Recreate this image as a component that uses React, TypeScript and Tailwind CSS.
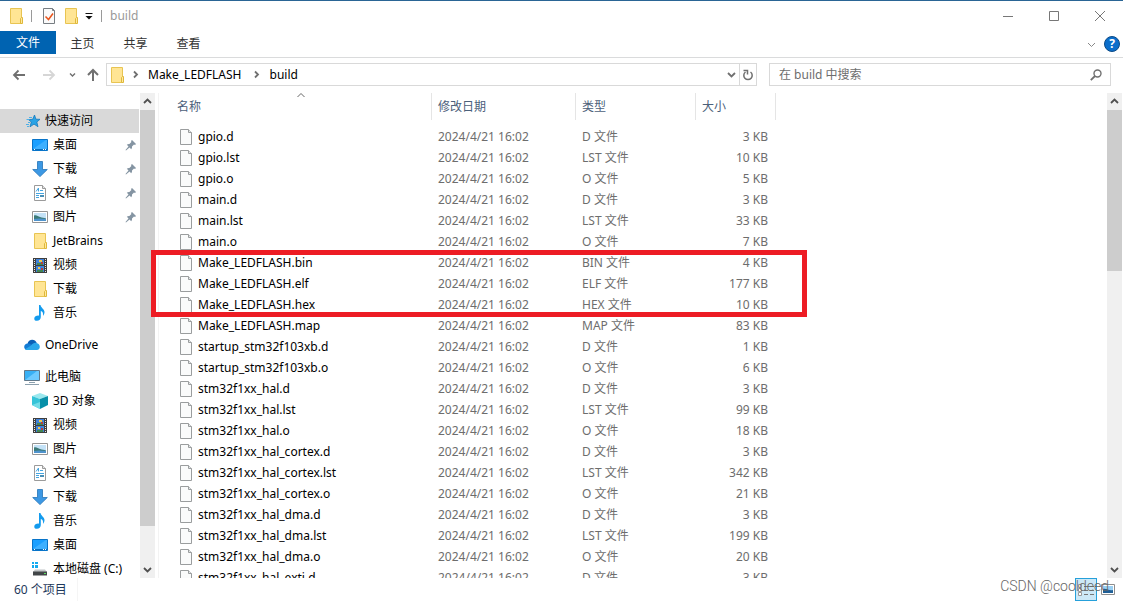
import type { ReactNode } from 'react';

type IconName =
  | 'star'
  | 'desktop'
  | 'download'
  | 'document'
  | 'picture'
  | 'folder'
  | 'video'
  | 'music'
  | 'cloud'
  | 'pc'
  | 'cube'
  | 'disk';

interface NavEntry {
  label: string;
  icon: IconName;
  pinned?: boolean;
}

interface NavGroup extends NavEntry {
  selected?: boolean;
  items: NavEntry[];
}

interface FileRow {
  name: string;
  size: number;
}

const NAV: NavGroup[] = [
  {
    label: '快速访问',
    icon: 'star',
    selected: true,
    items: [
      { label: '桌面', icon: 'desktop', pinned: true },
      { label: '下载', icon: 'download', pinned: true },
      { label: '文档', icon: 'document', pinned: true },
      { label: '图片', icon: 'picture', pinned: true },
      { label: 'JetBrains', icon: 'folder' },
      { label: '视频', icon: 'video' },
      { label: '下载', icon: 'folder' },
      { label: '音乐', icon: 'music' },
    ],
  },
  { label: 'OneDrive', icon: 'cloud', items: [] },
  {
    label: '此电脑',
    icon: 'pc',
    items: [
      { label: '3D 对象', icon: 'cube' },
      { label: '视频', icon: 'video' },
      { label: '图片', icon: 'picture' },
      { label: '文档', icon: 'document' },
      { label: '下载', icon: 'download' },
      { label: '音乐', icon: 'music' },
      { label: '桌面', icon: 'desktop' },
      { label: '本地磁盘 (C:)', icon: 'disk' },
    ],
  },
];

const FILES: FileRow[] = [
  { name: 'gpio.d', size: 3 },
  { name: 'gpio.lst', size: 10 },
  { name: 'gpio.o', size: 5 },
  { name: 'main.d', size: 3 },
  { name: 'main.lst', size: 33 },
  { name: 'main.o', size: 7 },
  { name: 'Make_LEDFLASH.bin', size: 4 },
  { name: 'Make_LEDFLASH.elf', size: 177 },
  { name: 'Make_LEDFLASH.hex', size: 10 },
  { name: 'Make_LEDFLASH.map', size: 83 },
  { name: 'startup_stm32f103xb.d', size: 1 },
  { name: 'startup_stm32f103xb.o', size: 6 },
  { name: 'stm32f1xx_hal.d', size: 3 },
  { name: 'stm32f1xx_hal.lst', size: 99 },
  { name: 'stm32f1xx_hal.o', size: 18 },
  { name: 'stm32f1xx_hal_cortex.d', size: 3 },
  { name: 'stm32f1xx_hal_cortex.lst', size: 342 },
  { name: 'stm32f1xx_hal_cortex.o', size: 21 },
  { name: 'stm32f1xx_hal_dma.d', size: 3 },
  { name: 'stm32f1xx_hal_dma.lst', size: 199 },
  { name: 'stm32f1xx_hal_dma.o', size: 20 },
  { name: 'stm32f1xx_hal_exti.d', size: 3 },
];

const fileType = (name: string) => `${name.split('.').pop()!.toUpperCase()} 文件`;

const ICONS: Record<IconName, ReactNode> = {
  star: (
    <>
      <path d="M10.500 2l1.400 4.200 4.100.1-3.200 2.700 1.200 4.700-4-2.600-4 2.700 1.300-4.800L4.500 6.600l4.200-.3z" fill="#29a3e6" stroke="#1479bd" strokeWidth=".8" />
      <path d="M5 4.500h3M2.500 6.500h3M4 9.500h2M2 11.500h3M3 13.500h2" stroke="#4fb0e6" />
    </>
  ),
  desktop: (
    <>
      <path d="M.5 2.500h15v11H.5z" fill="#1a9fff" stroke="#0874c9" />
      <path d="M1 12L14 3h1v9z" fill="#3eb0ff" />
      <path d="M1 12.500h14" stroke="#0870c0" />
      <path d="M2 12.500h1M11 12.500h1M13 12.500h1" stroke="#fff" />
    </>
  ),
  download: <path d="M5.500.5h5v8h4.800L8 15.600.7 8.500h4.800z" fill="#3c98e4" stroke="#2474b8" strokeWidth=".8" />,
  document: (
    <>
      <path d="M2.500.5h8l3 3v12h-11z" fill="#fff" stroke="#9b9b9b" />
      <path d="M10.500.5v3h3" fill="#e5e5e5" stroke="#9b9b9b" />
      <path d="M4 6.500L6.500 3v3.500M8 5.500h3M4 8.500h8M4 10.500h3M4 12.500h3" stroke="#45a5e0" fill="none" />
      <path d="M8 10h4v2H8z" fill="#4b8fb5" />
    </>
  ),
  picture: (
    <>
      <path d="M.5 2.500h15v11H.5z" fill="#fff" stroke="#959595" />
      <path d="M2 4h12v8H2z" fill="#c4e2f7" />
      <path d="M2 6.500c2-1 4 .5 6 1.500s4 .8 6 1.500v1H2z" fill="#3c7a78" />
      <path d="M2 10c4-1 8-.5 12 0v2H2z" fill="#4f93cc" />
    </>
  ),
  folder: (
    <>
      <path d="M2.500.5h11v15h-11z" fill="#ffe594" stroke="#e8c452" />
      <path d="M12.500 15.500v-5l1-1h1v6z" fill="#ffe89e" stroke="#dfb83a" />
    </>
  ),
  video: (
    <>
      <path d="M1 1h14v15H1z" fill="#3f3f3f" />
      <path d="M2.500 2v13M13.500 2v13" stroke="#e6e6e6" strokeDasharray="1 1" />
      <path d="M4 2h8v6H4zM4 9h8v6H4z" fill="#3f82dc" />
      <path d="M5 6h6v2H5zM5 13h6v2H5z" fill="#428653" />
      <path d="M7 3h3v2H7zM6 10h2v2H6z" fill="#efc94c" />
      <path d="M9 5h2v2H9zM9 11h2v2H9z" fill="#ba3f35" />
    </>
  ),
  music: (
    <path d="M7 0h1.500c.2 2.700 4 4 4 7 0 2-.8 3-1.500 3.800.4-2.700-.3-4.200-2.200-4.800V12c0 2-1.600 3.800-3.800 3.800-2 0-3-1-2.700-2.600.3-1.700 2.400-2.900 4.700-2.500z" fill="#139bee" />
  ),
  cloud: (
    <>
      <path d="M3.500 7C4 4 6 2.800 8.200 2.800c2 0 3.600 1 4.500 3L8 10z" fill="#0a60b7" />
      <path d="M3.500 6.500c2 0 2.500.5 4 1.300l6 4.200-10 1C1.500 13 .2 11.600.2 10c0-2 1.600-3.500 3.300-3.500z" fill="#137bd4" />
      <path d="M7 8.500c1.700-2.200 3.500-3 5.400-2.500 2.100.3 3.400 1.800 3.400 3.800 0 1.700-1 3.200-3 3.200H3c-1.200 0-1.600-.3-2-.8z" fill="#2aa7ea" />
    </>
  ),
  pc: (
    <>
      <path d="M.5 1.500h15v10H.5z" fill="#38b0f5" stroke="#61788a" />
      <path d="M1 11L13 2h2v9z" fill="#6dcaff" />
      <path d="M5 13.500h6M1 15.500h14" stroke="#8ca0ae" />
    </>
  ),
  cube: (
    <>
      <path d="M8 0l8 3-8 3-8-3z" fill="#9be8ee" />
      <path d="M0 3l8 3v10l-8-4z" fill="#35c4d8" />
      <path d="M16 3L8 6v10l8-4z" fill="#078fa8" />
      <path d="M0 12l8-3v7z" fill="#73dce7" />
    </>
  ),
  disk: (
    <>
      <path d="M0 1h2v2H0zM3 1h3v2H3zM0 4h2v3H0zM3 4h3v3H3z" fill="#13aaf0" />
      <path d="M3 8.500h10l2 2.500H1z" fill="#c1c5c7" />
      <path d="M1 10.500h14v4H1z" fill="#424648" />
      <path d="M12 12.500h2" stroke="#5be05f" />
    </>
  ),
};

function Icon({ name }: { name: IconName }) {
  return (
    <svg viewBox="0 0 16 16" className="size-4 shrink-0" aria-hidden="true">
      {ICONS[name]}
    </svg>
  );
}

function PinIcon() {
  return (
    <svg viewBox="0 0 12 12" className="size-3 shrink-0" aria-hidden="true">
      <path d="M7 1l4 4-1 1-1-.4-2 2c.1 1 0 1.900-.8 2.600L4.500 8.500 1 11.500l-.5-.5 3-3.500L1.800 5.800c.8-.7 1.600-.9 2.600-.8l2-2L6 2z" fill="#8494a2" />
    </svg>
  );
}

function PageIcon() {
  return (
    <svg viewBox="0 0 12 16" className="h-4 w-3 shrink-0" aria-hidden="true">
      <path d="M.5.5h8l3 3v12H.5z" fill="#fafbfb" stroke="#9a9d9e" />
      <path d="M8.500.5v3h3" fill="#e4e7e8" stroke="#9a9d9e" />
    </svg>
  );
}

function Chevron({ dir, className = '' }: { dir: 'up' | 'down' | 'right'; className?: string }) {
  const d = { up: 'M1 6l3.500-3.500L8 6', down: 'M1 3l3.500 3.500L8 3', right: 'M3 1l3.500 3.500L3 8' }[dir];
  return (
    <svg viewBox="0 0 9 9" className={`size-[9px] shrink-0 ${className}`} aria-hidden="true">
      <path d={d} fill="none" stroke="currentColor" />
    </svg>
  );
}

// heavier arrow for scroll buttons and the address bar
function Arrow({ dir, className = '' }: { dir: 'up' | 'down' | 'right'; className?: string }) {
  const d = { up: 'M1 6l3.500-3.500L8 6', down: 'M1 3l3.500 3.500L8 3', right: 'M3 1.500l3 3-3 3' }[dir];
  return (
    <svg viewBox="0 0 9 9" className={`size-[9px] shrink-0 ${className}`} aria-hidden="true">
      <path d={d} fill="none" stroke="currentColor" strokeWidth="1.800" />
    </svg>
  );
}

function ScrollBar({ thumb }: { thumb: string }) {
  return (
    <div className="flex w-[15px] shrink-0 flex-col bg-[#f0f0f0] text-[#505050]">
      <button type="button" aria-label="向上滚动" className="flex h-[17px] shrink-0 items-center justify-center">
        <Arrow dir="up" />
      </button>
      <div className="min-h-0 flex-1">
        <div className={`w-full bg-[#cdcdcd] ${thumb}`} />
      </div>
      <button type="button" aria-label="向下滚动" className="flex h-[17px] shrink-0 items-center justify-center">
        <Arrow dir="down" />
      </button>
    </div>
  );
}

function TitleBar() {
  return (
    <header className="flex h-[31px] shrink-0 items-center border-t border-[#2a6595] pb-px pl-2">
      <Icon name="folder" />
      <span className="ml-[7px] h-3 w-px bg-[#9a9a9a]" />
      <button type="button" aria-label="属性" className="ml-[10px]">
        <svg viewBox="0 0 14 16" className="h-4 w-[14px]">
          <path d="M1.500.5h9l2 2v13h-11z" fill="#fafafa" stroke="#777d82" />
          <path d="M10.500.5v2h2" fill="none" stroke="#777d82" />
          <path d="M3.500 8.500l3 3L11 5.500" fill="none" stroke="#e9541c" strokeWidth="1.500" />
        </svg>
      </button>
      <button type="button" aria-label="新建文件夹" className="ml-[7px]">
        <Icon name="folder" />
      </button>
      <button type="button" aria-label="自定义快速访问工具栏" className="ml-[6px]">
        <svg viewBox="0 0 8 8" className="size-2">
          <path d="M.5 1.500h7" stroke="#111" />
          <path d="M.5 4h7L4 7.500z" fill="#111" />
        </svg>
      </button>
      <span className="mx-2 h-3 w-px bg-[#9a9a9a]" />
      <h1 className="text-[#999]">build</h1>
      <div className="ml-auto flex h-full text-[#777]">
        <button type="button" aria-label="最小化" className="flex w-[46px] items-center justify-center">
          <svg viewBox="0 0 10 10" className="size-[10px]">
            <path d="M0 5.500h10" stroke="currentColor" />
          </svg>
        </button>
        <button type="button" aria-label="最大化" className="flex w-[46px] items-center justify-center">
          <svg viewBox="0 0 10 10" className="size-[10px]">
            <path d="M.5.5h9v9h-9z" fill="none" stroke="currentColor" />
          </svg>
        </button>
        <button type="button" aria-label="关闭" className="flex w-[46px] items-center justify-center">
          <svg viewBox="0 0 10 10" className="size-[10px]">
            <path d="M0 0l10 10M10 0L0 10" stroke="currentColor" />
          </svg>
        </button>
      </div>
    </header>
  );
}

function Ribbon() {
  return (
    <div className="flex h-[27px] shrink-0 items-start border-b border-[#dadbdc]">
      <button type="button" className="h-[23px] w-14 bg-[#0063b1] text-white">
        文件
      </button>
      {['主页', '共享', '查看'].map((tab) => (
        <button key={tab} type="button" className="h-[25px] w-[53px] text-[#333]">
          {tab}
        </button>
      ))}
      <div className="ml-auto flex items-center gap-2 pt-[5px] pr-[3px]">
        <button type="button" aria-label="展开功能区" className="text-[#888]">
          <Chevron dir="down" />
        </button>
        <button
          type="button"
          aria-label="帮助"
          className="flex size-4 items-center justify-center rounded-full border border-[#0c4a86] bg-[#0b6ecb] font-bold text-white"
        >
          ?
        </button>
      </div>
    </div>
  );
}

function AddressBar() {
  return (
    <div className="mb-[2px] flex h-[33px] shrink-0 items-center pr-3 text-[#707070]">
      <button type="button" aria-label="后退" className="ml-3">
        <svg viewBox="0 0 14 12" className="h-3 w-[14px]">
          <path d="M13 6H2M6.500 1.500L2 6l4.500 4.500" fill="none" stroke="currentColor" strokeWidth="1.800" />
        </svg>
      </button>
      <button type="button" aria-label="前进" disabled className="ml-4 text-[#d6d6d6]">
        <svg viewBox="0 0 14 12" className="h-3 w-[14px]">
          <path d="M1 6h11M7.500 1.500L12 6l-4.500 4.500" fill="none" stroke="currentColor" strokeWidth="1.800" />
        </svg>
      </button>
      <button type="button" aria-label="最近浏览的位置" className="ml-3">
        <svg viewBox="0 0 9 9" className="size-[9px]">
          <path d="M2 3.500l2.500 2.500L7 3.500" fill="none" stroke="currentColor" strokeWidth="1.400" />
        </svg>
      </button>
      <button type="button" aria-label="上移" className="ml-[10px]">
        <svg viewBox="0 0 12 14" className="h-[14px] w-3">
          <path d="M6 13V2M1 7l5-5 5 5" fill="none" stroke="currentColor" strokeWidth="2" />
        </svg>
      </button>
      <div className="ml-[7px] flex h-[23px] flex-1 items-center border border-[#d9d9d9] pl-[2px]">
        <Icon name="folder" />
        <Arrow dir="right" className="ml-[6px]" />
        <button type="button" className="ml-2 text-black">
          Make_LEDFLASH
        </button>
        <Arrow dir="right" className="ml-[10px]" />
        <button type="button" className="ml-[9px] text-black">
          build
        </button>
        <button type="button" aria-label="历史位置" className="mr-[3px] ml-auto">
          <Arrow dir="down" />
        </button>
        <button type="button" aria-label="刷新" className="flex h-full w-[17px] items-center justify-center border-l border-[#d9d9d9]">
          <svg viewBox="0 0 12 12" className="size-3">
            <path d="M3.500 3A4.200 4.200 0 1 0 8.500 3" fill="none" stroke="currentColor" strokeWidth="1.500" />
            <path d="M1.500 1.500h4v4" fill="none" stroke="currentColor" strokeWidth="1.500" />
          </svg>
        </button>
      </div>
      <label className="ml-3 flex h-[23px] w-[342px] items-center border border-[#d9d9d9] pr-2 pl-[9px]">
        <input
          type="search"
          aria-label="搜索"
          placeholder="在 build 中搜索"
          className="min-w-0 flex-1 outline-none placeholder:text-[#6d6d6d]"
        />
        <svg viewBox="0 0 12 12" className="size-3">
          <circle cx="7.500" cy="4.500" r="3.500" fill="none" stroke="currentColor" strokeWidth="1.400" />
          <path d="M5 7L.8 11.200" stroke="currentColor" strokeWidth="1.800" />
        </svg>
      </label>
    </div>
  );
}

function NavPane() {
  return (
    <nav className="flex shrink-0 border-r border-[#f3f3f3] pr-[3px]">
      <ul className="flex w-[140px] flex-col gap-2 overflow-hidden pt-4 pr-px">
        {NAV.map((group) => (
          <li key={group.label}>
            <a
              href="#"
              className={`flex h-6 items-center gap-[5px] pl-6 ${group.selected ? 'bg-[#d9d9d9]' : ''}`}
            >
              <Icon name={group.icon} />
              {group.label}
            </a>
            <ul>
              {group.items.map((item, i) => (
                <li key={i}>
                  <a href="#" className="flex h-6 items-center gap-[5px] pr-[2px] pl-8 whitespace-nowrap">
                    <Icon name={item.icon} />
                    <span className="flex-1">{item.label}</span>
                    {item.pinned && <PinIcon />}
                  </a>
                </li>
              ))}
            </ul>
          </li>
        ))}
      </ul>
      <ScrollBar thumb="h-[416px]" />
    </nav>
  );
}

function HeaderCell({ children, sorted }: { children: ReactNode; sorted?: boolean }) {
  return (
    <th className="p-0 font-normal" aria-sort={sorted ? 'ascending' : undefined}>
      <div className="relative mb-[6px] flex h-[27px] items-center border-r border-[#e5e5e5] pl-[6px]">
        {children}
        {sorted && <Chevron dir="up" className="absolute top-[-2px] left-1/2 -translate-x-1/2 text-[#666]" />}
      </div>
    </th>
  );
}

function FileList() {
  return (
    <div className="min-w-0 flex-1 overflow-hidden pl-3">
      <table className="w-[605px] table-fixed border-collapse">
        <colgroup>
          <col className="w-[261px]" />
          <col className="w-[144px]" />
          <col className="w-[120px]" />
          <col className="w-[80px]" />
        </colgroup>
        <thead className="text-left text-[#4c607a]">
          <tr>
            <HeaderCell sorted>名称</HeaderCell>
            <HeaderCell>修改日期</HeaderCell>
            <HeaderCell>类型</HeaderCell>
            <HeaderCell>大小</HeaderCell>
          </tr>
        </thead>
        <tbody className="text-[#6d6d6d]">
          {FILES.map((file) => (
            <tr key={file.name} className="h-[21px]">
              <td className="p-0 pl-[9px] text-black">
                <span className="flex items-center gap-[6px]">
                  <PageIcon />
                  {file.name}
                </span>
              </td>
              <td className="p-0 pl-[6px]">2024/4/21 16:02</td>
              <td className="p-0 pl-[6px]">{fileType(file.name)}</td>
              <td className="p-0 pr-2 text-right">{file.size} KB</td>
            </tr>
          ))}
        </tbody>
      </table>
    </div>
  );
}

function StatusBar() {
  return (
    <footer className="relative flex h-[23px] shrink-0 items-center pr-2 pl-[14px] text-[#1e395b]">
      <span>60 个项目</span>
      <span className="ml-[10px] h-full w-px bg-[#f5f5f5]" />
      <button
        type="button"
        aria-label="详细信息"
        className="ml-auto flex h-full w-[22px] items-center justify-center border border-[#26a0da] bg-[#cce8f7]"
      >
        <svg viewBox="0 0 16 14" className="h-[14px] w-4">
          <path d="M.5 1.500h3v3h-3zM.5 5.500h3v3h-3zM.5 9.500h3v3h-3z" fill="#fff" stroke="#999" />
          <path d="M6 3.500h4M12 3.500h4M6 7.500h4M12 7.500h4M6 11.500h4M12 11.500h4" stroke="#777" />
        </svg>
      </button>
      <button type="button" aria-label="大缩略图" className="ml-1">
        <svg viewBox="0 0 14 11" className="h-[11px] w-[14px]">
          <path d="M.5.5h13v10H.5z" fill="#fff" stroke="#8e8e8e" />
          <path d="M2 2h10v7H2z" fill="#9ad0f3" />
          <path d="M2 5c3-1 6 2 10 1v3H2z" fill="#1f5f96" />
        </svg>
      </button>
      <span className="pointer-events-none absolute right-[14px] bottom-[5px] font-[Roboto,sans-serif] text-sm font-light text-[#666]">
        CSDN @cooldeed
      </span>
    </footer>
  );
}

export default function App() {
  return (
    <div className="flex h-screen flex-col overflow-hidden bg-white font-['Noto_Sans','Noto_Sans_CJK_SC',sans-serif] text-xs text-black">
      <TitleBar />
      <Ribbon />
      <AddressBar />
      <main className="relative flex min-h-0 flex-1 pr-px">
        <NavPane />
        <FileList />
        <ScrollBar thumb="h-[161px]" />
        {/* marks the three build outputs: bin, elf, hex */}
        <div className="pointer-events-none absolute top-[157px] left-[151px] h-[67px] w-[656px] border-5 border-[#ed1c24]" />
      </main>
      <StatusBar />
    </div>
  );
}
